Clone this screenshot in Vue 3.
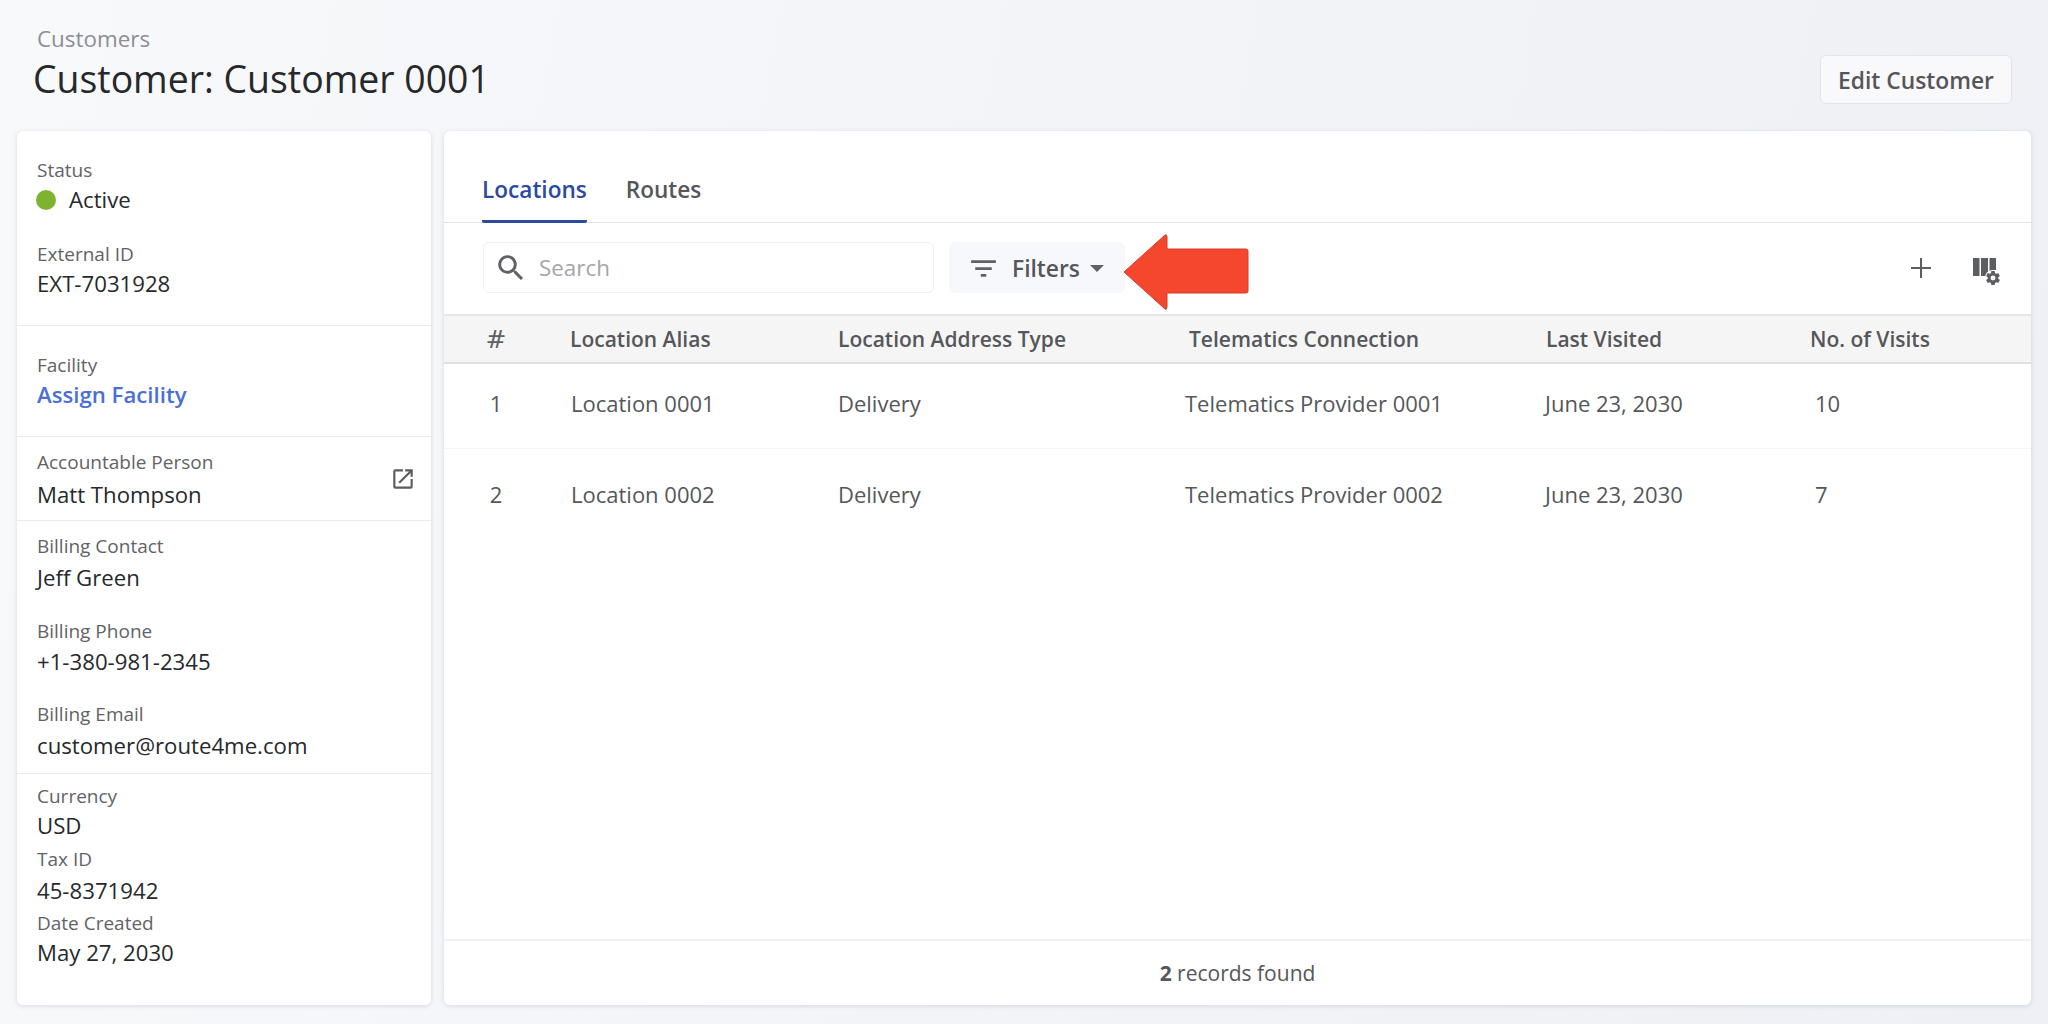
<script setup>
const sections = [
  { cls: 'sec-first', fields: [
    { label: 'Status', value: 'Active', status: true },
    { label: 'External ID', value: 'EXT-7031928' },
  ] },
  { cls: 'sec-first', fields: [{ label: 'Facility', value: 'Assign Facility', link: true }] },
  { cls: 'sec-person', fields: [{ label: 'Accountable Person', value: 'Matt Thompson', external: true }] },
  { cls: 'sec-billing', fields: [
    { label: 'Billing Contact', value: 'Jeff Green' },
    { label: 'Billing Phone', value: '+1-380-981-2345' },
    { label: 'Billing Email', value: 'customer@route4me.com' },
  ] },
  { cls: 'sec-meta', fields: [
    { label: 'Currency', value: 'USD' },
    { label: 'Tax ID', value: '45-8371942' },
    { label: 'Date Created', value: 'May 27, 2030' },
  ] },
]

const columns = ['Location Alias', 'Location Address Type', 'Telematics Connection', 'Last Visited', 'No. of Visits']

const rows = [
  { id: 1, alias: 'Location 0001', type: 'Delivery', provider: 'Telematics Provider 0001', visited: 'June 23, 2030', visits: 10 },
  { id: 2, alias: 'Location 0002', type: 'Delivery', provider: 'Telematics Provider 0002', visited: 'June 23, 2030', visits: 7 },
]
</script>

<template>
  <div class="page">
    <header class="page-header">
      <div>
        <div class="crumb">Customers</div>
        <h1 class="title">Customer: Customer 0001</h1>
      </div>
      <button class="edit-btn">Edit Customer</button>
    </header>

    <main class="content">
      <aside class="side-card">
        <section v-for="(sec, i) in sections" :key="i" class="section" :class="sec.cls">
          <div v-for="f in sec.fields" :key="f.label" class="field">
            <div class="field-label">{{ f.label }}</div>
            <div class="field-value" :class="{ link: f.link }">
              <span v-if="f.status" class="dot"></span>
              {{ f.value }}
            </div>
            <svg v-if="f.external" class="external-icon" viewBox="0 0 24 24">
              <path d="M19 19H5V5h7V3H5a2 2 0 0 0-2 2v14a2 2 0 0 0 2 2h14a2 2 0 0 0 2-2v-7h-2v7zM14 3v2h3.59l-9.83 9.83 1.41 1.41L19 6.41V10h2V3h-7z" />
            </svg>
          </div>
        </section>
      </aside>

      <section class="main-card">
        <nav class="tabs">
          <a class="tab active">Locations</a>
          <a class="tab">Routes</a>
        </nav>

        <div class="toolbar">
          <div class="search">
            <svg class="search-icon" viewBox="0 0 24 24">
              <path d="M9.5 3a6.5 6.5 0 0 1 4.94 10.73l.27.27h.79l5 5-1.5 1.5-5-5v-.79l-.27-.27A6.5 6.5 0 1 1 9.5 3m0 2a4.5 4.5 0 1 0 0 9 4.5 4.5 0 0 0 0-9z" />
            </svg>
            <span class="placeholder">Search</span>
          </div>
          <button class="filter-btn">
            <svg class="filter-icon" viewBox="0 0 24 24">
              <path d="M3 6h18v2H3V6zm3 5h12v2H6v-2zm4 5h4v2h-4v-2z" />
            </svg>
            Filters
            <span class="caret"></span>
          </button>
          <svg class="callout" viewBox="0 0 128 78">
            <path d="M43 2 L2 39 L43 76 Q45 77 45 74 L45 60 L124 60 Q126 60 126 58 L126 18 Q126 16 124 16 L45 16 L45 4 Q45 1 43 2 Z" fill="#f4472d" stroke="#d63c28" stroke-width="1" />
          </svg>
          <div class="tool-icons">
            <svg class="plus-icon" viewBox="0 0 20 20"><path d="M9 0h2v9h9v2h-9v9H9v-9H0V9h9z" /></svg>
            <svg class="columns-icon" viewBox="0 0 28 27">
              <path d="M0 0h6.5v18H0zM8 0h7v18H8zM16.5 0H23v12h-4l-2.500 4z" />
              <circle cx="20" cy="20" r="8" fill="#fff" />
              <g transform="translate(11.6 11.6) scale(0.7)">
                <path fill-rule="evenodd" d="M12,15.5A3.5,3.5 0 0,1 8.5,12A3.5,3.5 0 0,1 12,8.5A3.5,3.5 0 0,1 15.5,12A3.5,3.5 0 0,1 12,15.5M19.43,12.97C19.47,12.65 19.5,12.33 19.5,12C19.5,11.67 19.47,11.34 19.43,11L21.54,9.37C21.73,9.22 21.78,8.95 21.66,8.73L19.66,5.27C19.54,5.05 19.27,4.96 19.05,5.05L16.56,6.05C16.04,5.66 15.5,5.32 14.87,5.07L14.5,2.42C14.46,2.18 14.25,2 14,2H10C9.75,2 9.54,2.18 9.5,2.42L9.13,5.07C8.5,5.32 7.96,5.66 7.44,6.05L4.95,5.05C4.73,4.96 4.46,5.05 4.34,5.27L2.34,8.73C2.21,8.95 2.27,9.22 2.46,9.37L4.57,11C4.53,11.34 4.5,11.67 4.5,12C4.5,12.33 4.53,12.65 4.57,12.97L2.46,14.63C2.27,14.78 2.21,15.05 2.34,15.27L4.34,18.73C4.46,18.95 4.73,19.03 4.95,18.95L7.44,17.94C7.96,18.34 8.5,18.68 9.13,18.93L9.5,21.58C9.54,21.82 9.75,22 10,22H14C14.25,22 14.46,21.82 14.5,21.58L14.87,18.93C15.5,18.67 16.04,18.34 16.56,17.94L19.05,18.95C19.27,19.03 19.54,18.95 19.66,18.73L21.66,15.27C21.78,15.05 21.73,14.78 21.54,14.63L19.43,12.97Z" />
              </g>
            </svg>
          </div>
        </div>

        <div class="table-head">
          <div class="hash">#</div>
          <div v-for="c in columns" :key="c">{{ c }}</div>
        </div>
        <div class="table-body">
          <div v-for="row in rows" :key="row.id" class="table-row">
            <div class="num">{{ row.id }}</div>
            <div>{{ row.alias }}</div>
            <div>{{ row.type }}</div>
            <div>{{ row.provider }}</div>
            <div>{{ row.visited }}</div>
            <div>{{ row.visits }}</div>
          </div>
        </div>

        <footer class="table-footer"><b>2</b>&nbsp;records found</footer>
      </section>
    </main>
  </div>
</template>

<style>
html,
body {
  margin: 0;
  overflow: hidden;
}
</style>

<style scoped>
.page {
  width: 2048px;
  height: 1024px;
  box-sizing: border-box;
  padding: 0 17px 19px;
  display: flex;
  flex-direction: column;
  font-family: "Open Sans", "Liberation Sans", sans-serif;
  background: linear-gradient(100deg, #f8f9fb 0%, #f3f4f8 50%, #eef0f5 100%);
  color: #2b2b2b;
}

.page-header {
  height: 131px;
  flex-shrink: 0;
  display: flex;
  justify-content: space-between;
  align-items: flex-start;
}

.crumb {
  margin: 25px 0 0 20px;
  font-size: 22.4px;
  line-height: 28px;
  color: #8d8f93;
}

.title {
  margin: 1px 0 0 16px;
  font-size: 37.4px;
  line-height: 50px;
  font-weight: 400;
  color: #26282b;
}

.edit-btn {
  margin: 55px 19px 0 0;
  width: 192px;
  height: 49px;
  padding-top: 2px;
  background: #f9f9fc;
  border: 1px solid #e3e4ea;
  border-radius: 6px;
  font: 600 22.8px "Open Sans", sans-serif;
  color: #555659;
}

.content {
  flex: 1;
  display: flex;
  gap: 13px;
  min-height: 0;
}

.side-card,
.main-card {
  background: #fff;
  border-radius: 6px;
  box-shadow: 0 1px 5px rgba(40, 50, 80, 0.14);
}

.side-card {
  width: 414px;
  flex-shrink: 0;
}

.section {
  border-bottom: 1px solid #e9eaec;
  padding: 12px 20px 10px;
}

.section:last-child {
  border-bottom: 0;
}

.sec-first {
  padding: 26px 20px 24px;
}

.sec-person {
  padding-bottom: 8px;
}

.sec-meta {
  padding-top: 9px;
}

.field {
  position: relative;
  margin-bottom: 23px;
}

.sec-first .field {
  margin-bottom: 24px;
}

.field:last-child,
.sec-first .field:last-child {
  margin-bottom: 0;
}

.sec-meta .field {
  margin-bottom: 3px;
}

.field-label {
  font-size: 19px;
  line-height: 26px;
  color: #616366;
}

.field-value {
  font-size: 22.2px;
  line-height: 34px;
  color: #27292c;
  display: flex;
  align-items: center;
}

.field-value.link {
  font-weight: 600;
  color: #4a6fd8;
}

.sec-person .field-value {
  margin-top: 3px;
}

.sec-billing .field:first-child .field-value {
  margin-top: 2px;
}

.sec-billing .field:nth-child(2) .field-value {
  margin: 1px 0 -1px;
}

.sec-billing .field:nth-child(3) .field-value {
  margin-top: 2px;
}

.sec-meta .field:nth-child(2) .field-value {
  margin: 2px 0 -1px;
}

.dot {
  width: 20px;
  height: 20px;
  margin: 0 13px 0 -1px;
  border-radius: 50%;
  background: #7fb32f;
}

.external-icon {
  position: absolute;
  right: -5px;
  top: 17px;
  width: 26px;
  height: 26px;
  fill: #5b5d60;
}

.main-card {
  flex: 1;
  min-width: 0;
  position: relative;
  display: flex;
  flex-direction: column;
}

.tabs {
  height: 92px;
  flex-shrink: 0;
  box-sizing: border-box;
  padding-left: 39px;
  display: flex;
  gap: 39px;
  align-items: flex-end;
  border-bottom: 1px solid #e2e3e6;
}

.tab {
  height: 57px;
  box-sizing: border-box;
  font-size: 22.6px;
  font-weight: 600;
  line-height: 50px;
  color: #55575a;
}

.tab.active {
  color: #2c4a9e;
  border-bottom: 3px solid #2c4a9e;
  margin: 0 0 -1px -1px;
  height: 58px;
  border-radius: 0 0 2px 2px;
}

.toolbar {
  height: 91px;
  flex-shrink: 0;
  box-sizing: border-box;
  padding: 19px 0 0 39px;
  display: flex;
  gap: 15px;
  align-items: flex-start;
  position: relative;
}

.search {
  width: 451px;
  height: 51px;
  box-sizing: border-box;
  padding-left: 10px;
  display: flex;
  align-items: center;
  gap: 11px;
  border: 1px solid #f0f1f3;
  border-radius: 6px;
}

.search-icon {
  width: 34px;
  height: 34px;
  fill: #5f6164;
}

.placeholder {
  font-size: 22.4px;
  color: #a4a6a9;
}

.filter-btn {
  width: 176px;
  height: 51px;
  padding: 2px 0 0 18px;
  display: flex;
  align-items: center;
  gap: 12px;
  border: 0;
  border-radius: 6px;
  background: #f7f8fb;
  font: 600 22.8px "Open Sans", sans-serif;
  color: #55575a;
}

.filter-icon {
  width: 33px;
  height: 33px;
  fill: #5f6164;
}

.caret {
  width: 0;
  height: 0;
  margin-left: -2px;
  border-left: 7px solid transparent;
  border-right: 7px solid transparent;
  border-top: 7px solid #606265;
}

.callout {
  position: absolute;
  left: 678px;
  top: 10px;
  width: 128px;
  height: 78px;
}

.tool-icons {
  margin-left: auto;
  margin-right: 30px;
  padding-top: 16px;
  display: flex;
  align-items: flex-start;
  gap: 42px;
}

.plus-icon {
  width: 20px;
  height: 20px;
  fill: #5c5e61;
}

.columns-icon {
  width: 28px;
  height: 27px;
  fill: #5c5e61;
}

.table-head,
.table-row {
  display: grid;
  align-items: center;
}

.table-head {
  grid-template-columns: 126px 268px 351px 357px 264px 1fr;
  height: 50px;
  flex-shrink: 0;
  box-sizing: border-box;
  background: #f5f5f6;
  border-top: 2px solid #e4e5e7;
  border-bottom: 2px solid #e0e1e3;
  font-size: 21px;
  font-weight: 600;
  color: #55575a;
}

.hash {
  padding-left: 39px;
  width: 26px;
  text-align: center;
  font-family: "DejaVu Sans", sans-serif;
  font-size: 25px;
  font-weight: 400;
  color: #5f6164;
}

.table-body {
  flex: 1;
  min-height: 0;
}

.table-row {
  grid-template-columns: 127px 267px 347px 360px 270px 1fr;
  height: 85px;
  box-sizing: border-box;
  padding-bottom: 7px;
  border-bottom: 1px solid #f4f5f6;
  font-size: 22px;
  color: #55575a;
}

.table-row:last-child {
  height: 92px;
  padding-bottom: 2px;
  border-bottom: 0;
}

.num {
  padding-left: 39px;
  width: 26px;
  text-align: center;
}

.table-footer {
  height: 66px;
  flex-shrink: 0;
  box-sizing: border-box;
  padding-bottom: 1px;
  display: flex;
  align-items: center;
  justify-content: center;
  border-top: 2px solid #f1f2f3;
  font-size: 21px;
  color: #55575a;
}

.table-footer b {
  font-weight: 700;
}
</style>
